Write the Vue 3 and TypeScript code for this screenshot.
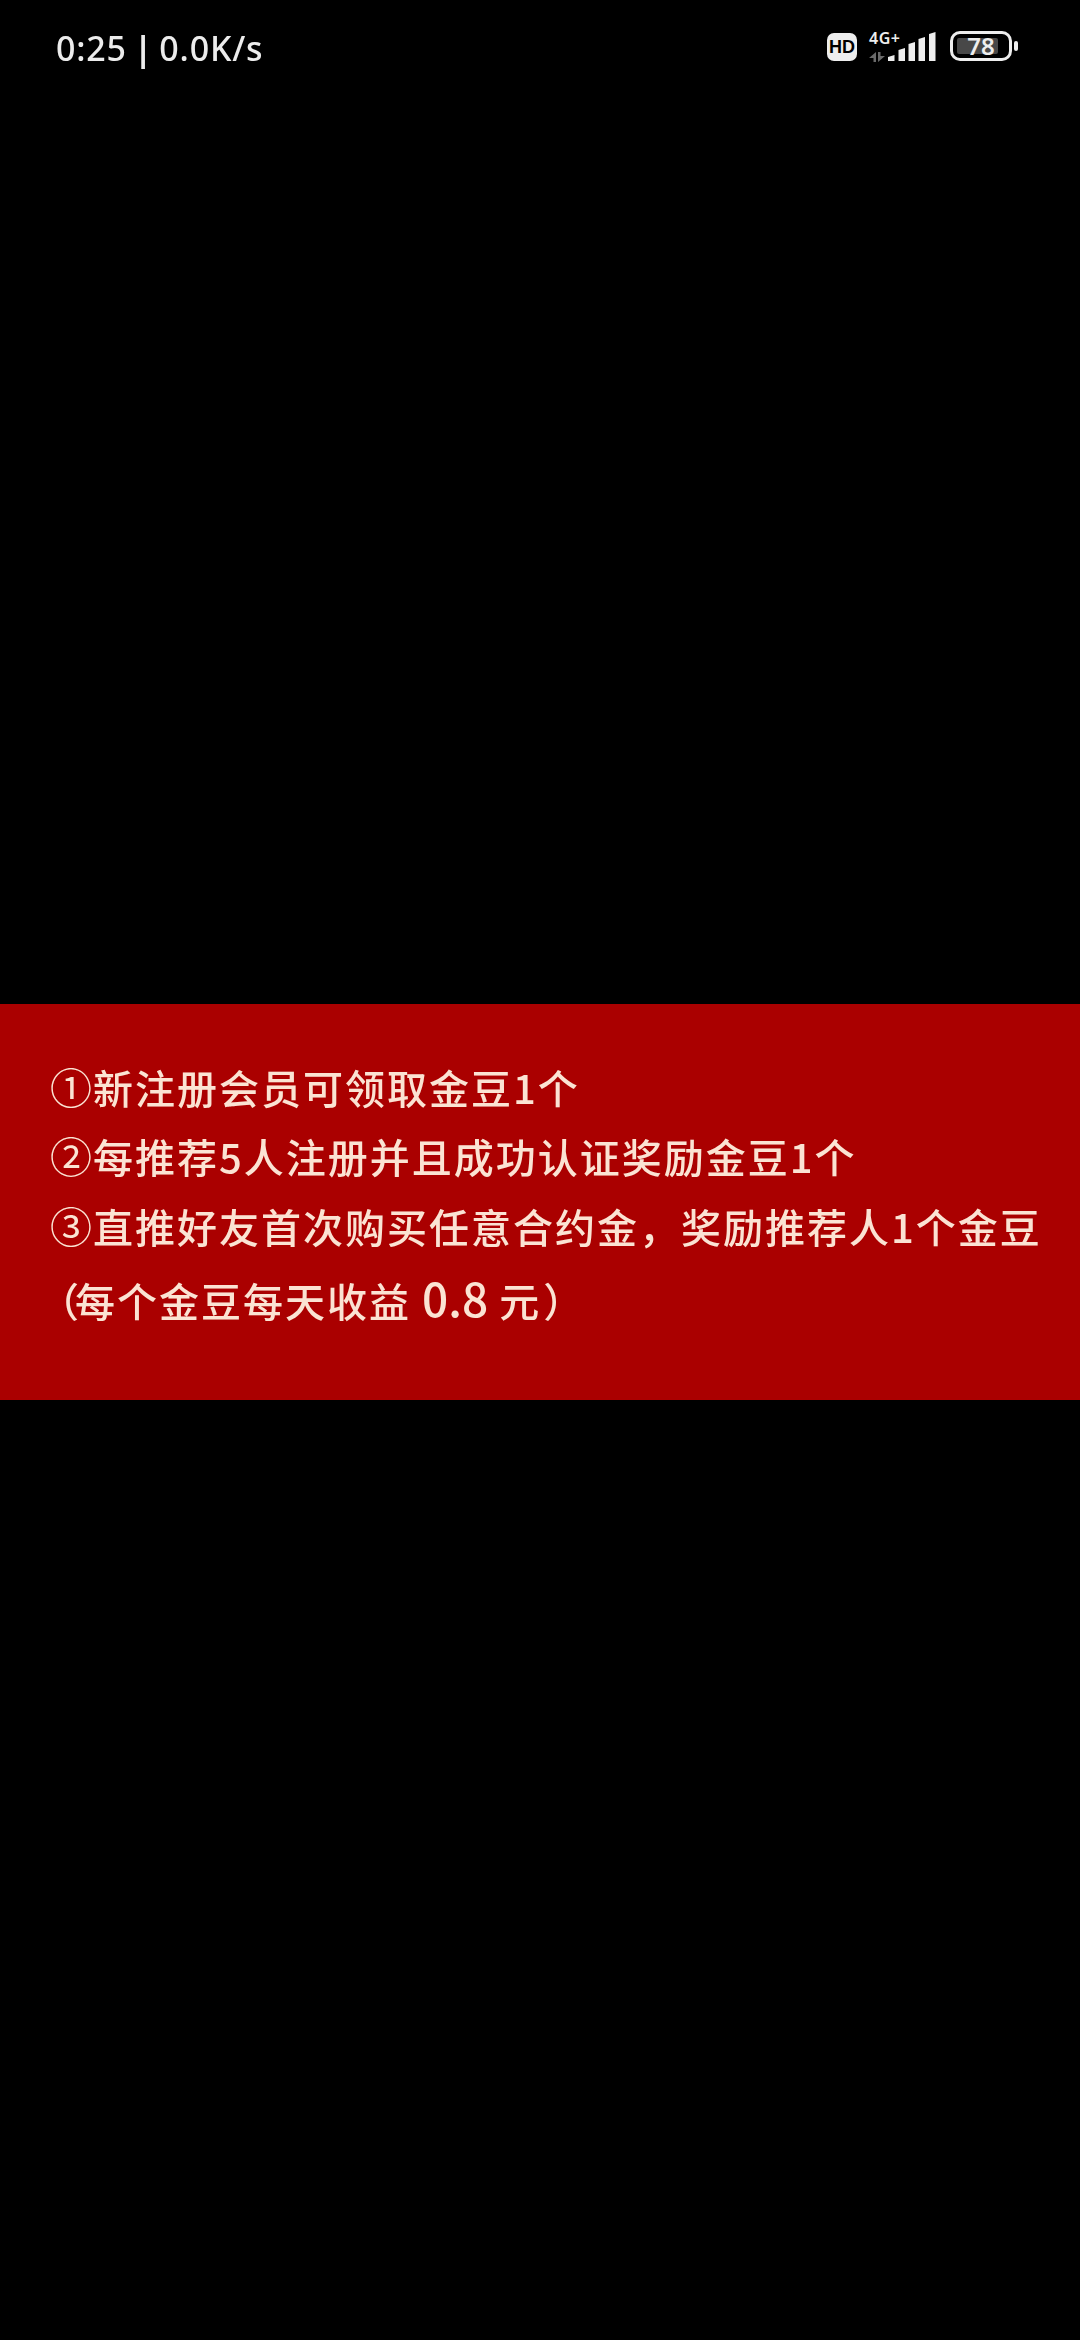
<script setup lang="ts">
const bars = [
  { x: 0, h: 6 },
  { x: 10.500, h: 13 },
  { x: 20.500, h: 19 },
  { x: 30.500, h: 24 },
  { x: 41, h: 29 },
]
const barPath = (x: number, h: number): string =>
  `M${x} 29V${31 - h}L${x + 6.5} ${29 - h}V29Z`
</script>

<template>
  <div class="page">
    <header class="status">
      <span class="clock">0:25<span class="pipe">|</span>0.0K/s</span>
      <div class="icons">
        <span class="hd">HD</span>
        <div class="net">
          <span class="g">4G+</span>
          <svg class="arrows" width="16" height="10" viewBox="0 0 16 10">
            <path d="M7 0v10H4.500V6H0z" fill="#6a6a6a" />
            <path d="M9 0h2.500v4H16L9 10z" fill="#6a6a6a" />
          </svg>
        </div>
        <svg class="signal" width="48" height="29" viewBox="0 0 48 29">
          <path v-for="b in bars" :key="b.x" :d="barPath(b.x, b.h)" fill="#eee" />
        </svg>
        <div class="battery">
          <div class="shell">
            <div class="level"></div>
            <span class="pct">78</span>
          </div>
          <div class="tip"></div>
        </div>
      </div>
    </header>
    <section class="banner">
      <p class="line l1"><span class="c">①</span>新注册会员可领取金豆1个</p>
      <p class="line"><span class="c">②</span>每推荐5人注册并且成功认证奖励金豆1个</p>
      <p class="line l3"><span class="c">③</span>直推好友首次购买任意合约金，奖励推荐人1个金豆</p>
      <p class="line"><span class="po">（</span>每个金豆每天收益 <span class="big">0.8</span> 元<span class="pc">）</span></p>
    </section>
  </div>
</template>

<style>
html, body { margin: 0; background: #000; }
</style>

<style scoped>
.page {
  width: 1080px;
  height: 2340px;
  background: #000;
  overflow: hidden;
}
.status {
  height: 1004px;
  box-sizing: border-box;
  padding: 28px 0 0 56px;
  display: flex;
  align-items: flex-start;
  justify-content: space-between;
}
.clock {
  font-family: "Noto Sans", sans-serif;
  font-weight: 500;
  font-size: 34px;
  line-height: 40px;
  letter-spacing: 0.8px;
  color: #ececec;
  filter: blur(0.4px);
}
.pipe {
  display: inline-block;
  margin: 0 6px 0 7px;
  font-weight: 700;
}
.icons {
  display: flex;
  align-items: flex-start;
  padding-right: 62px;
  padding-top: 4px;
}
.hd {
  width: 30px;
  height: 28px;
  margin-top: 1px;
  border-radius: 7px;
  background: #eee;
  color: #000;
  font: 900 18px/28px "Liberation Sans", sans-serif;
  text-align: center;
}
.net {
  display: flex;
  flex-direction: column;
  margin-left: 12px;
  width: 19px;
}
.g {
  font: 600 16px/12px "Noto Sans", sans-serif;
  letter-spacing: 0.5px;
  color: #eee;
  white-space: nowrap;
}
.arrows { margin-top: 8px; }
.battery {
  display: flex;
  align-items: center;
  margin-left: 14px;
  margin-top: -1px;
}
.shell {
  position: relative;
  width: 62px;
  height: 30px;
  box-sizing: border-box;
  border: 3px solid #eee;
  border-radius: 10px;
}
.level {
  position: absolute;
  left: 4px;
  top: 4px;
  width: 41px;
  height: 16px;
  background: #484848;
  border-radius: 2px;
}
.pct {
  position: absolute;
  inset: 0;
  text-align: center;
  font: 600 24px/24px "Noto Sans", sans-serif;
  color: #eee;
}
.tip {
  width: 4px;
  height: 10px;
  margin-left: 2px;
  background: #eee;
  border-radius: 2px;
}
.banner {
  height: 396px;
  box-sizing: border-box;
  background: #aa0000;
  padding-top: 57px;
  display: flex;
  flex-direction: column;
}
.line {
  margin: 0;
  height: 70px;
  padding-left: 50px;
  font-family: "Noto Sans CJK SC", sans-serif;
  font-weight: 500;
  font-size: 40px;
  line-height: 50px;
  letter-spacing: 2px;
  color: #fbe3d3;
  white-space: nowrap;
  filter: blur(0.4px);
}
.c {
  display: inline-block;
  width: 43px;
  font-size: 42px;
  font-weight: 400;
  letter-spacing: 0;
}
.l1 { height: 69px; }
.l3 { height: 72px; }
.po {
  display: inline-block;
  margin-left: 9px;
  margin-right: -4px;
  letter-spacing: 0;
  font-feature-settings: "halt";
}
.pc {
  display: inline-block;
  letter-spacing: 0;
  font-feature-settings: "halt";
  margin-left: 2px;
}
.big {
  font-size: 46px;
  letter-spacing: 0;
}
</style>
